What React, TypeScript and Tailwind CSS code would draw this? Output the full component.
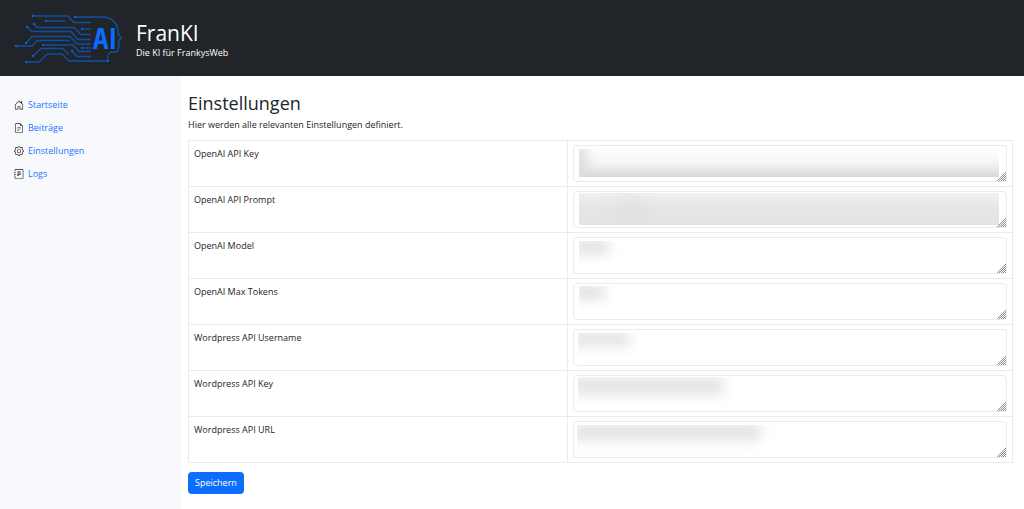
import React, { useState } from 'react';
import { BsFileEarmarkText, BsGear, BsHouseDoor, BsJournalText } from 'react-icons/bs';

const navItems = [
  { label: 'Startseite', icon: BsHouseDoor },
  { label: 'Beiträge', icon: BsFileEarmarkText },
  { label: 'Einstellungen', icon: BsGear },
  { label: 'Logs', icon: BsJournalText },
];

// mask: clipping box over the value, smear: the blurred shape inside it
const settings = [
  {
    id: 'openai-key',
    label: 'OpenAI API Key',
    mask: 'left-[6px] right-[8px] top-1 h-7 bg-linear-to-b from-white via-[#f5f5f5] to-[#d6d8d8]',
    smear: 'left-[-8px] top-[-4px] w-4 h-9 bg-[#dcdddd] blur-[6px]',
  },
  {
    id: 'openai-prompt',
    label: 'OpenAI API Prompt',
    mask: 'left-[6px] right-[8px] top-[2px] h-8 bg-linear-to-b from-[#f0f0f0] via-[#e5e6e6] to-[#e2e3e4]',
    smear: 'left-[40px] top-2 w-[24px] h-4 bg-[#dcdddd] blur-[9px]',
  },
  {
    id: 'openai-model',
    label: 'OpenAI Model',
    mask: 'left-[6px] w-[60px] top-1 h-7',
    smear: 'left-[-6px] top-[-2px] w-9 h-4 bg-[#e2e4e4] blur-[6px]',
  },
  {
    id: 'openai-tokens',
    label: 'OpenAI Max Tokens',
    mask: 'left-[6px] w-[60px] top-[3px] h-7',
    smear: 'left-[-6px] top-[-2px] w-8 h-4 bg-[#e2e4e4] blur-[6px]',
  },
  {
    id: 'wp-user',
    label: 'Wordpress API Username',
    mask: 'left-[5px] w-[80px] top-1 h-6',
    smear: 'left-[-6px] top-[-2px] w-[58px] h-4 bg-[#e4e6e6] blur-[6px]',
  },
  {
    id: 'wp-key',
    label: 'Wordpress API Key',
    mask: 'left-[5px] w-[180px] top-[2px] h-7',
    smear: 'left-[-6px] top-0 w-[152px] h-[18px] bg-[#e4e5e5] blur-[6px]',
  },
  {
    id: 'wp-url',
    label: 'Wordpress API URL',
    mask: 'left-[4px] w-[220px] top-1 h-7',
    smear: 'left-[-6px] top-[-2px] w-[190px] h-[18px] bg-[#e4e5e5] blur-[6px]',
  },
];

const logoLines = [
  'M33 16H68L74 22.5H91',
  'M46 21H65',
  'M34 24L37 27.5H74L81 34.5H91',
  'M27 27L32 31.5H71L78 39.5H91',
  'M26 43L32 36.5H70L77 44H91',
  'M16 46H32L37 40.5H70',
  'M43 45H73L79 51.5H91',
  'M33 56L41 48.5H63L69 55',
  'M26 62H39L47 54H62L69 61H108',
  'M72 51L77 56.5H91',
  'M82 29H91',
  'M82 48H91',
  'M75 17H102C112 17 117 23 118 30V34L121.5 38L119 40L120 42L118 43L119 45L118 51L116 52H111C108 53 107 57 108 61',
];

const logoDots = [
  [33, 16], [46, 21], [34, 24], [27, 27], [26, 43], [16, 46], [43, 45],
  [33, 56], [26, 62], [72, 51], [82, 29], [82, 48], [75, 17], [108, 61],
];

const Logo: React.FC = () => (
  <svg className="w-[124px] h-[76px] shrink-0" viewBox="0 0 124 76" fill="none" role="img" aria-label="FranKI Logo">
    <g stroke="#0f4fa3" strokeWidth="1.4" strokeLinejoin="round">
      {logoLines.map((d) => (
        <path key={d} d={d} />
      ))}
    </g>
    {logoDots.map(([x, y]) => (
      <circle key={`${x}-${y}`} cx={x} cy={y} r="1.2" fill="#0d5fd6" />
    ))}
    <text x="93" y="49" fontSize="29" fontWeight="700" fill="#0a6cff" fontFamily="'Liberation Sans Narrow', 'Open Sans Condensed', 'Roboto Condensed', sans-serif">
      AI
    </text>
  </svg>
);

const Grip: React.FC = () => (
  <svg className="absolute right-px bottom-px w-[9px] h-[9px] pointer-events-none" viewBox="0 0 9 9" stroke="#8f8f8f" strokeWidth="1">
    <path d="M0 9L9 0M2 9L9 2M4 9L9 4M6 9L9 6M8 9L9 8" />
  </svg>
);

const App: React.FC = () => {
  const [values, setValues] = useState<Record<string, string>>({});

  return (
    <div className="min-h-screen flex flex-col bg-white text-[#212529] text-[9px] leading-[14px] font-['Open_Sans','Noto_Sans',sans-serif]">
      <header className="h-[76px] bg-[#212529] text-white flex items-center gap-3">
        <Logo />
        <div className="pt-1">
          <h1 className="text-[21px] leading-[25px]">FranKI</h1>
          <p>Die KI für FrankysWeb</p>
        </div>
      </header>

      <div className="flex flex-1">
        <nav className="w-[181px] shrink-0 bg-[#f8f9fc] px-[14px] pt-[22px]">
          <ul className="flex flex-col gap-[9px]">
            {navItems.map(({ label, icon: Icon }) => (
              <li key={label}>
                <a href="#" className="flex items-center gap-1 text-[#1a75ff]">
                  <Icon className="size-[10px] text-[#212529]" />
                  {label}
                </a>
              </li>
            ))}
          </ul>
        </nav>

        <main className="flex-1 pl-[7px] pr-[11px] pt-4 pb-4">
          <h2 className="text-[18px] leading-[22px]">Einstellungen</h2>
          <p className="mt-1">Hier werden alle relevanten Einstellungen definiert.</p>

          <form onSubmit={(e) => e.preventDefault()}>
            <table className="mt-2 w-full table-fixed border-collapse">
              <tbody>
                {settings.map((s) => (
                  <tr key={s.id}>
                    <td className="w-[46%] border border-[#e9ebee] align-top px-[5px] py-[6px]">
                      <label htmlFor={s.id}>{s.label}</label>
                    </td>
                    <td className="border border-[#e9ebee] px-[5px] py-1">
                      <div className="relative">
                        <textarea
                          id={s.id}
                          value={values[s.id] ?? ''}
                          onChange={(e) => setValues({ ...values, [s.id]: e.target.value })}
                          className="block w-full h-[37px] resize-none rounded-[4px] border border-[#e9ebee] bg-white px-[6px] py-1"
                        />
                        <div className={`absolute overflow-hidden pointer-events-none ${s.mask}`}>
                          <div className={`absolute ${s.smear}`} />
                        </div>
                        <Grip />
                      </div>
                    </td>
                  </tr>
                ))}
              </tbody>
            </table>

            <button type="submit" className="mt-[9px] h-[22px] px-[7px] rounded-[4px] bg-[#0d6efd] text-white">
              Speichern
            </button>
          </form>
        </main>
      </div>
    </div>
  );
};

export default App;
